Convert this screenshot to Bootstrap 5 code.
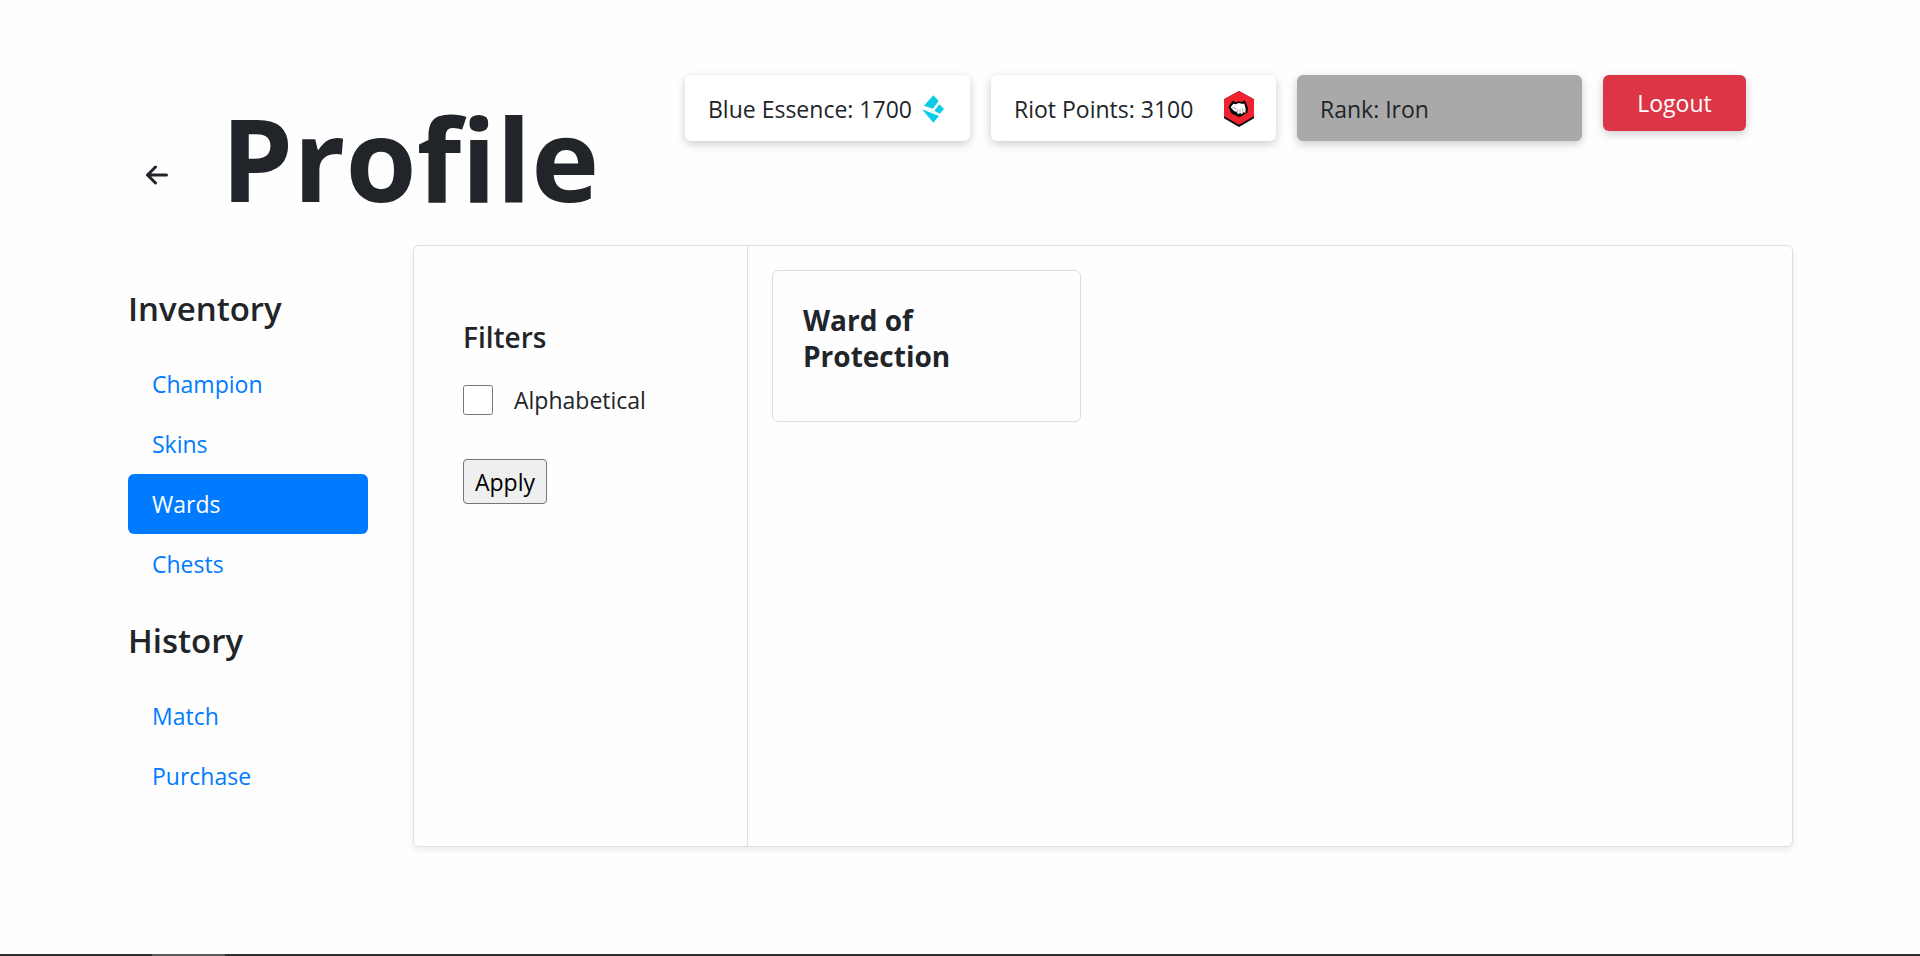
<!DOCTYPE html>
<html lang="en">
<head>
<meta charset="utf-8">
<meta name="viewport" content="width=device-width, initial-scale=1">
<title>Profile</title>
<link href="https://cdn.jsdelivr.net/npm/bootstrap@5.3.0/dist/css/bootstrap.min.css" rel="stylesheet">
<style>
  body { font-family: "Open Sans", "Noto Sans", sans-serif; font-size: 23px; line-height: 36px; color: #212529; background: #fefefe; }
  .page { padding: 75px 127px 48px 128px; }
  .title-area { padding-top: 12px; }
  .page-title { font-size: 115px; line-height: 142px; font-weight: 700; margin: 0 0 0 11px; }
  .back-btn { width: 58px; height: 44px; margin-bottom: 32px; color: #212529; }
  .stats { gap: 21px; margin-right: 47px; }
  .stat { width: 285px; height: 66px; padding: 2px 22px 0 23px; border-radius: 6px; background: #fff; box-shadow: 0 3px 10px rgba(0, 0, 0, .2); }
  .stat-rank { background: #a9a9a9; }
  .logout { width: 143px; height: 56px; border-radius: 6px; font-size: 23px; line-height: 36px; background: #dc3545; box-shadow: 0 3px 10px rgba(0, 0, 0, .2); }
  .main-area { gap: 45px; }
  .sidebar { width: 240px; padding-top: 43px; }
  .side-title { font-size: 33px; line-height: 42px; font-weight: 600; margin: 0 0 24px; }
  .side-nav { margin-bottom: 26px; }
  .side-nav .nav-link { padding: 12px 24px; color: #007bff; border-radius: 6px; }
  .side-nav .nav-link.active { background: #007bff; color: #fff; }
  .panel { min-height: 602px; border: 1px solid #dfdfdf; border-radius: 6px; box-shadow: 0 3px 6px rgba(0, 0, 0, .075); }
  .filters { width: 334px; padding: 73px 48px 48px 49px; border-right: 1px solid #dfdfdf; }
  .filters h2 { font-size: 28px; line-height: 36px; font-weight: 600; margin: 0 0 27px; }
  .filters input { width: 30px; height: 30px; margin: 0; }
  .filter-row { gap: 21px; margin-bottom: 41px; }
  .apply { height: 45px; padding: 0 11px; border: 1px solid #767676; border-radius: 4px; background: #efefef; color: #000; }
  .results { padding: 24px; }
  .ward { width: 309px; min-height: 152px; padding: 31px 30px; border: 1px solid #dfdfdf; border-radius: 6px; }
  .ward h3 { font-size: 28px; line-height: 36px; font-weight: 700; margin: 0; }
  .taskbar { height: 2px; background: #2f2f2f; padding-left: 152px; }
  .taskbar span { width: 73px; background: #5c5c5c; }
</style>
</head>
<body class="min-vh-100 d-flex flex-column">
<div class="page flex-grow-1">
  <header class="d-flex justify-content-between align-items-start pb-3">
    <div class="title-area d-flex align-items-end">
      <button type="button" class="back-btn btn p-0 border-0 d-flex align-items-center justify-content-center me-4" aria-label="Back">
        <svg width="22" height="20" viewBox="0 0 22 20" fill="none" stroke="currentColor" stroke-width="3" stroke-linecap="round" stroke-linejoin="round" aria-hidden="true"><path d="M20.500 10H2M9.500 2L1.500 10l8 8"/></svg>
      </button>
      <h1 class="page-title">Profile</h1>
    </div>
    <div class="stats d-flex align-items-start">
      <div class="stat d-flex align-items-center justify-content-between">
        <span>Blue Essence: 1700</span>
        <svg class="me-1" width="22" height="28" viewBox="0 0 66 84" fill="#0acbe6" aria-hidden="true"><path d="M34 1L50 17 33 41 6 32zM52 28L66 42 53 56 37 47zM0 43L51 63 34 83z"/></svg>
      </div>
      <div class="stat d-flex align-items-center justify-content-between">
        <span>Riot Points: 3100</span>
        <svg width="30" height="36" viewBox="0 0 90 108" aria-hidden="true">
          <path d="M45 0L90 25V82L45 108 0 82V25z" fill="#0b0b0b"/>
          <path d="M45 0L90 25V76L45 101 0 76V25z" fill="#ef2330"/>
          <path d="M26 29L35 34 44 31 53 33 62 28 66 35 72 52 70 65 47 79 23 68 13 48z" fill="#080808"/>
          <path d="M28 38L35 40 44 36 53 38 61 38 65 53 64 66 58 63 54 70 48 66 42 70 37 62 30 60 20 49z" fill="#fff"/>
          <path d="M39 54l2 11M48 55v10M56 52l1 10M25 49l12 5" stroke="#777" stroke-width="2" fill="none"/>
        </svg>
      </div>
      <div class="stat stat-rank d-flex align-items-center"><span>Rank: Iron</span></div>
      <button type="button" class="logout btn btn-danger border-0">Logout</button>
    </div>
  </header>
  <main class="main-area d-flex">
    <aside class="sidebar flex-shrink-0">
      <h2 class="side-title">Inventory</h2>
      <nav class="side-nav nav nav-pills flex-column" aria-label="Inventory">
        <a class="nav-link" href="#champion">Champion</a>
        <a class="nav-link" href="#skins">Skins</a>
        <a class="nav-link active" aria-current="page" href="#wards">Wards</a>
        <a class="nav-link" href="#chests">Chests</a>
      </nav>
      <h2 class="side-title">History</h2>
      <nav class="side-nav nav nav-pills flex-column" aria-label="History">
        <a class="nav-link" href="#match">Match</a>
        <a class="nav-link" href="#purchase">Purchase</a>
      </nav>
    </aside>
    <section class="panel d-flex flex-grow-1">
      <form class="filters flex-shrink-0">
        <h2>Filters</h2>
        <div class="filter-row d-flex align-items-center">
          <input type="checkbox" id="alphabetical">
          <label for="alphabetical">Alphabetical</label>
        </div>
        <button type="button" class="apply">Apply</button>
      </form>
      <div class="results flex-grow-1">
        <article class="ward"><h3>Ward of Protection</h3></article>
      </div>
    </section>
  </main>
</div>
<div class="taskbar d-flex"><span></span></div>
<script src="https://cdn.jsdelivr.net/npm/bootstrap@5.3.0/dist/js/bootstrap.bundle.min.js"></script>
</body>
</html>
